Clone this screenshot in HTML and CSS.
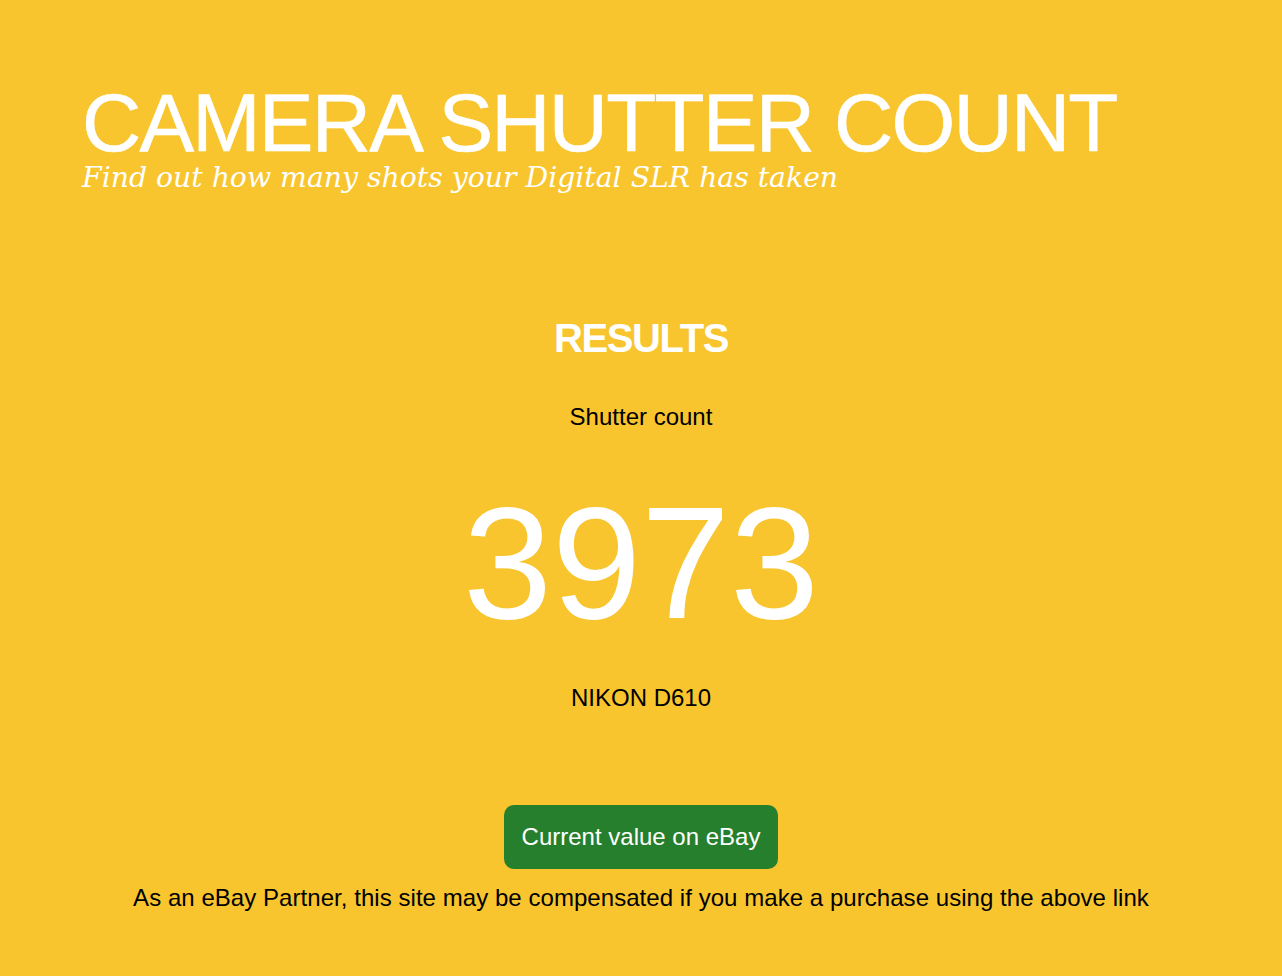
FILE: index.html
```html
<!DOCTYPE html>
<html lang="en">
  <head>
    <meta charset="UTF-8" />
    <meta name="viewport" content="width=device-width, initial-scale=1.0" />
    <title>Camera Shutter Count</title>
    <link rel="stylesheet" href="styles.css">
  </head>
  <body>
    <header id="masthead">
      <h1 id="title">CAMERA SHUTTER COUNT</h1>
      <p id="tagline">Find out how many shots your Digital SLR has taken</p>
    </header>
    <main id="results">
      <h2 id="resultsHead">RESULTS</h2>
      <p class="label">Shutter count</p>
      <p id="count">3973</p>
      <p class="label" id="model">NIKON D610</p>
      <a id="ebay" href="#">Current value on eBay</a>
      <p class="label" id="disclaimer">As an eBay Partner, this site may be compensated if you make a purchase using the above link</p>
    </main>
  </body>
</html>
```

FILE: styles.css
```css
body {
  margin: 0;
  padding: 0;
  min-height: 976px;
  background-color: #f8c52e;
  font-family: "Liberation Sans", Arial, sans-serif;
  color: #000;
}
#masthead {
  padding: 84px 0 0 82px;
}
#title {
  margin: 0;
  font-size: 82px;
  line-height: 77px;
  font-weight: normal;
  letter-spacing: -1.8px;
  color: #fff;
  -webkit-text-stroke: 0.6px #fff;
}
#tagline {
  margin: 1px 0 0 0;
  font-family: "DejaVu Serif", Georgia, serif;
  font-style: italic;
  font-size: 28.3px;
  line-height: 32px;
  color: #fff;
}
#results {
  display: flex;
  flex-direction: column;
  align-items: center;
  text-align: center;
}
#resultsHead {
  margin: 120px 0 0 0;
  font-size: 40px;
  line-height: 48px;
  font-weight: bold;
  letter-spacing: -1.4px;
  color: #fff;
}
.label {
  margin: 41px 0 0 0;
  font-size: 24px;
  line-height: 28px;
}
#count {
  margin: 52px 0 0 0;
  font-size: 160px;
  line-height: 160px;
  color: #fff;
}
#model {
  margin-top: 41px;
}
#ebay {
  margin-top: 93px;
  padding: 18px 18px;
  font-size: 24px;
  line-height: 28px;
  color: #fff;
  text-decoration: none;
  background-color: #267f2c;
  border-radius: 10px;
}
#disclaimer {
  margin-top: 15px;
  letter-spacing: 0.05px;
}
```
